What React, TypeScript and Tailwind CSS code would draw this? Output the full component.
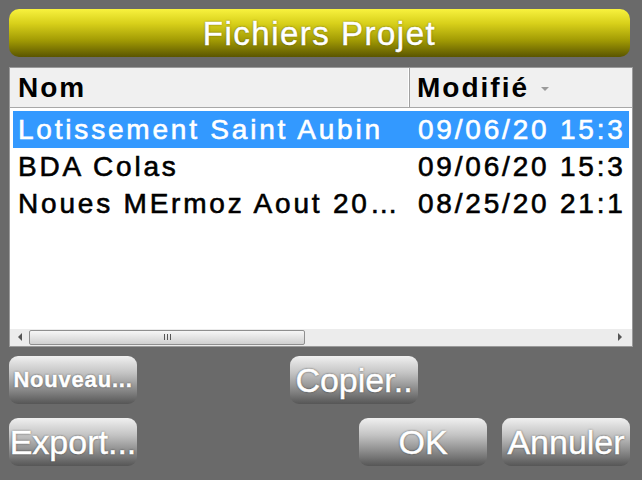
const font = "font-['Liberation_Sans',Arial,sans-serif]"

const rows = [
  { name: 'Lotissement Saint Aubin', date: '09/06/20 15:3', selected: true },
  { name: 'BDA Colas', date: '09/06/20 15:3', selected: false },
  { name: 'Noues MErmoz Aout 20…', date: '08/25/20 21:1', selected: false },
]

const Btn = ({ label, size = 'text-[34px]', className = '' }: { label: string; size?: string; className?: string }) => (
  <button
    className={`flex h-[48px] w-[128px] items-center justify-center overflow-hidden whitespace-nowrap rounded-[9px] bg-[linear-gradient(to_bottom,#f0f0f0_0%,#c4c4c4_35%,#8a8a8a_70%,#565656_100%)] leading-none text-white [-webkit-text-stroke:0.5px_#ffffff] [text-shadow:0_0_2px_#222] ${size} ${className}`}
  >
    {label}
  </button>
)

const FileList = () => {
  return (
    <div className="mx-[9px] mt-[10px] flex h-[280px] flex-col border border-[#9a9a9a] bg-white">
      <div className="flex h-[40px] shrink-0 border-b border-[#a8a8a8] bg-[#f0f0f0] text-[28px] font-bold tracking-[2px] text-black">
        <div className="flex w-[400px] items-center border-r border-[#a0a0a0] pl-[8px] shadow-[inset_-1px_0_0_#ffffff]">
          Nom
        </div>
        <div className="flex flex-1 items-center pl-[7px]">
          Modifié
          <span className="ml-[12px] mt-[2px] h-0 w-0 border-x-[4px] border-t-[4px] border-x-transparent border-t-[#9a9a9a]" />
        </div>
      </div>

      <div className="flex flex-1 flex-col overflow-hidden px-[3px] pt-[3px] text-[28px] tracking-[2.8px] [-webkit-text-stroke:0.6px_currentColor]">
        {rows.map((row) => (
          <div
            key={row.name}
            className={`flex h-[37px] shrink-0 items-center whitespace-nowrap ${row.selected ? 'bg-[#3399ff] text-white' : 'text-black'}`}
          >
            <div className="w-[397px] shrink-0 overflow-hidden pl-[5px]">{row.name}</div>
            <div className="flex-1 pl-[8px]">{row.date}</div>
          </div>
        ))}
      </div>

      <div className="flex h-[17px] shrink-0 items-center bg-[#ececec] pb-[1px]">
        <div className="flex w-[19px] justify-center">
          <span className="h-0 w-0 border-y-[4px] border-r-[4px] border-y-transparent border-r-[#555]" />
        </div>
        <div className="flex h-[15px] w-[276px] items-center justify-center gap-[2px] rounded-[2px] border border-[#8f8f8f] bg-[linear-gradient(to_bottom,#f6f6f6,#d0d0d0)]">
          <span className="h-[6px] w-[1px] bg-[#555]" />
          <span className="h-[6px] w-[1px] bg-[#555]" />
          <span className="h-[6px] w-[1px] bg-[#555]" />
        </div>
        <div className="flex-1" />
        <div className="flex w-[19px] justify-center pr-[6px]">
          <span className="h-0 w-0 border-y-[4px] border-l-[4px] border-y-transparent border-l-[#555]" />
        </div>
      </div>
    </div>
  )
}

export default function App() {
  return (
    <div className={`flex h-[480px] w-[642px] flex-col bg-[#6a6a6a] ${font}`}>
      <div className="mx-[9px] mt-[9px] flex h-[48px] w-[621px] items-center justify-center rounded-[10px] bg-[linear-gradient(to_bottom,#f8f23e_0%,#d8d01a_30%,#a29b04_65%,#5a5500_100%)] text-[33px] leading-none tracking-[1.5px] text-white [-webkit-text-stroke:0.5px_#ffffff] [text-shadow:0_0_2px_#4a4600]">
        Fichiers Projet
      </div>

      <FileList />

      <div className="mt-[9px] flex px-[9px]">
        <Btn label="Nouveau..." size="text-[22px] font-bold tracking-[0.8px]" />
        <Btn label="Copier.." className="ml-[153px]" />
      </div>
      <div className="mt-[14px] flex px-[9px]">
        <Btn label="Export..." />
        <Btn label="OK" className="ml-[222px]" />
        <Btn label="Annuler" className="ml-[15px]" />
      </div>
    </div>
  )
}
